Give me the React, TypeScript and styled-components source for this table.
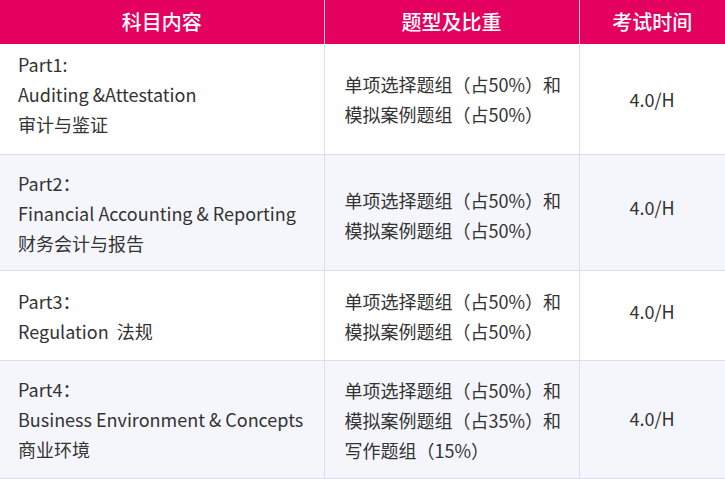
import React from "react";
import styled, { createGlobalStyle } from "styled-components";

const GlobalStyle = createGlobalStyle`
  html, body {
    margin: 0;
    padding: 0;
    background: #ffffff;
  }
  body {
    font-family: "Noto Sans CJK SC", "Noto Sans", sans-serif;
    color: #333333;
  }
`;

const Table = styled.table`
  width: 725px;
  border-collapse: collapse;
  table-layout: fixed;
  font-size: 18px;
  line-height: 30px;
`;

const HeadCell = styled.th`
  height: 44px;
  padding: 0;
  background: #e4005f;
  color: #ffffff;
  font-size: 20px;
  font-weight: 500;
  text-align: center;
  border-left: 1px solid #f0c2d6;
  &:first-child {
    border-left: none;
  }
`;

const Row = styled.tr<{ $alt?: boolean }>`
  background: ${(p) => (p.$alt ? "#f5f6fc" : "#ffffff")};
  border-bottom: 1px solid #dcdcee;
`;

// $shift > 0 moves the content down, < 0 moves it up, inside a middle-aligned cell
const Cell = styled.td<{ $align?: "left" | "center"; $top?: number; $bottom?: number; $shift?: number; $indent: number }>`
  padding-left: ${(p) => p.$indent}px;
  padding-right: 8px;
  padding-top: ${(p) => (p.$top ?? 0) + Math.max(0, (p.$shift ?? 0) * 2)}px;
  padding-bottom: ${(p) => (p.$bottom ?? 0) + Math.max(0, -(p.$shift ?? 0) * 2)}px;
  text-align: ${(p) => p.$align || "left"};
  vertical-align: middle;
  border-left: 1px solid #dcdcee;
  border-right: 1px solid #dcdcee;
  white-space: nowrap;
  &:first-child {
    border-left: none;
  }
`;

const Line = styled.div`
  white-space: pre;
`;

interface Item {
  title: string[];
  types: string[];
  time: string;
  top: number;
  bottom: number;
  midShift: number;
  timeShift: number;
}

const items: Item[] = [
  {
    title: ["Part1:", "Auditing &Attestation", "审计与鉴证"],
    types: ["单项选择题组（占50%）和", "模拟案例题组（占50%）"],
    time: "4.0/H",
    top: 5,
    bottom: 15,
    midShift: 0,
    timeShift: 0,
  },
  {
    title: ["Part2：", "Financial Accounting & Reporting", "财务会计与报告"],
    types: ["单项选择题组（占50%）和", "模拟案例题组（占50%）"],
    time: "4.0/H",
    top: 13,
    bottom: 12,
    midShift: 2,
    timeShift: -6,
  },
  {
    title: ["Part3：", "Regulation  法规"],
    types: ["单项选择题组（占50%）和", "模拟案例题组（占50%）"],
    time: "4.0/H",
    top: 15,
    bottom: 14,
    midShift: 0,
    timeShift: -5,
  },
  {
    title: ["Part4：", "Business Environment & Concepts", "商业环境"],
    types: ["单项选择题组（占50%）和", "模拟案例题组（占35%）和", "写作题组（15%）"],
    time: "4.0/H",
    top: 13,
    bottom: 14,
    midShift: 0,
    timeShift: -2,
  },
];

export default function App() {
  return (
    <>
      <GlobalStyle />
      <Table>
        <colgroup>
          <col style={{ width: 324 }} />
          <col style={{ width: 255 }} />
          <col style={{ width: 146 }} />
        </colgroup>
        <thead>
          <tr>
            <HeadCell>科目内容</HeadCell>
            <HeadCell>题型及比重</HeadCell>
            <HeadCell>考试时间</HeadCell>
          </tr>
        </thead>
        <tbody>
          {items.map((it, i) => (
            <Row key={i} $alt={i % 2 === 1}>
              <Cell $top={it.top} $bottom={it.bottom} $indent={18}>
                {it.title.map((t) => (
                  <Line key={t}>{t}</Line>
                ))}
              </Cell>
              <Cell $shift={it.midShift} $indent={20}>
                {it.types.map((t) => (
                  <Line key={t}>{t}</Line>
                ))}
              </Cell>
              <Cell $align="center" $shift={it.timeShift} $indent={8}>
                {it.time}
              </Cell>
            </Row>
          ))}
        </tbody>
      </Table>
    </>
  );
}
